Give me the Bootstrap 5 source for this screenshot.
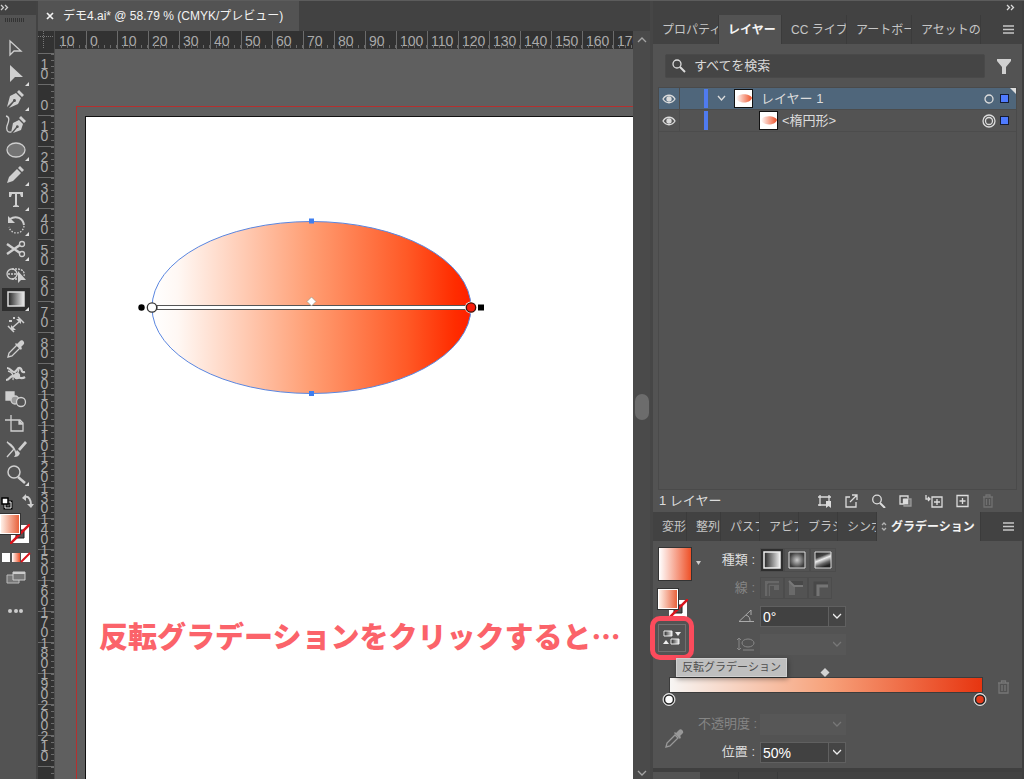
<!DOCTYPE html>
<html lang="ja">
<head>
<meta charset="utf-8">
<meta name="viewport" content="width=device-width, initial-scale=1">
<title>デモ4.ai</title>
<link href="https://cdn.jsdelivr.net/npm/bootstrap@5.3.0/dist/css/bootstrap.min.css" rel="stylesheet">
<style>
:root{--panel:#535353;--dark:#424242;--line:#484848;--ink:#dcdcdc}
body{background:var(--dark);color:var(--ink);font-family:"Liberation Sans","Noto Sans CJK JP",sans-serif;font-size:13px;line-height:20px;border-top:1px solid #5c5c5c}
svg{display:block;flex:none}
button{background:none;border:0;padding:0;color:inherit}
.i{fill:none;stroke:currentColor;stroke-width:1.3}
/* toolbar */
.toolbar{width:38px;background:var(--panel);border-right:2px solid #434343;color:#cfcfcf;flex:none}
.collapse-bar{height:14px;background:var(--dark);flex:none}
.grip{width:20px;height:4px;margin:3px 0 16px 5px;background:repeating-linear-gradient(90deg,#333 0 1px,transparent 1px 2px);flex:none}
.tool{width:28px;height:23px;margin:0 0 2px 2px;position:relative}
.tool.fly::after{content:"";position:absolute;right:1px;bottom:0;border:2px solid;border-color:transparent #ddd #ddd transparent}
.tool.on{background:#2e2e2e}
.pair{position:relative;width:30px;height:30px}
.pair-fill{position:absolute;left:0;top:0;width:20px;height:20px;border:1px solid #fff;outline:1px solid #333;background:linear-gradient(90deg,#fff0e7,#e8623c)}
.pair svg{position:absolute;right:0;bottom:0}
/* document window */
.doc-tabs{height:31px;background:var(--dark)}
.doc-tab{width:261px;background:var(--panel);color:#f2f2f2;font-size:12px;padding-left:8px}
.ruler{background:#323232;color:#aaa;font-size:14px}
.corner{width:17px;height:18px;flex:none;border-right:1px solid #4b4b4b}
.hr-cell{width:31px;height:18px;flex:none;border-left:1px solid #6b6b6b;padding-left:3px;line-height:21px;position:relative}
.hr-cell:first-child{border-color:transparent}
.hr-cell::after{content:"";position:absolute;left:0;right:0;bottom:1px;height:3px;background:repeating-linear-gradient(90deg,transparent 0 5px,#6b6b6b 5px 6px)}
.v-ruler{width:17px;padding-top:4px;border-right:1px solid #4b4b4b;overflow:hidden;flex:none}
.vr-cell{height:31px;flex:none;border-top:1px solid #6b6b6b;padding:0 3px 5px 0;line-height:10px;position:relative}
.vr-cell::after{content:"";position:absolute;top:0;bottom:0;right:0;width:3px;background:repeating-linear-gradient(0deg,transparent 0 5px,#6b6b6b 5px 6px)}
.stage{background:#5f5f5f;padding:57px 0 0 21px;overflow:hidden}
.bleed{border:solid #b5302f;border-width:1px 0 0 1px;padding:9px 0 0 8px}
.artboard{background:#fff;border:solid #111;border-width:1px 0 0 1px;overflow:hidden}
.art{margin:101px 0 0 50px}
.caption-text{margin:221px 0 0 13px;font-family:"Noto Sans CJK JP",sans-serif;font-weight:900;font-size:29px;line-height:32px;color:#fb636a;white-space:nowrap}
.scroll{width:17px;background:#4a4a4a;color:#a5a5a5;flex:none;padding:6px 0 2px}
.thumb{width:14px;height:26px;border-radius:7px;background:#6c6c6c}
/* panels */
.dock{width:374px;flex:none;border-left:3px solid #464646;border-right:2px solid #3e3e3e}
.ptabs{background:var(--dark);font-size:12px;height:29px;color:#c6c6c6;flex:none}
.ptab{overflow:hidden;white-space:nowrap;text-align:left;border-right:1px solid #3b3b3b;padding-left:9px;flex:none}
.ptab.on{background:var(--panel);color:#f4f4f4;font-weight:700}
.w34{width:34px}.w39{width:39px}.w47{width:47px}.w63{width:63px}.w65{width:65px}.w66{width:66px}.w69{width:69px}.w104{width:104px}
.panel{background:var(--panel)}
.stack{padding-top:10px}
.search-box{width:320px;height:24px;margin-left:12px;background:#454545;border:1px solid #494949;border-radius:2px}
.search-box input{background:none;border:0;padding:0;color:#d8d8d8;outline:0;min-width:0}
.search-box input::placeholder{color:#d8d8d8}
.layers{margin:9px 5px 0;border:1px solid #4a4a4a}
.lrow{height:22px;border-bottom:1px solid #4c4c4c;position:relative}
.lrow.on{background:#4f667b}
.lrow.on::after{content:"";position:absolute;right:0;top:0;border:3px solid;border-color:#ddd #ddd transparent transparent}
.eye{width:21px;height:21px;border-right:1px solid #4c4c4c;padding-left:3px}
.stripe{width:4px;height:19px;margin-left:24px;background:#4f7bf0}
.thumbnail{width:19px;height:19px;border:1px solid #111;background:#fff}
.child{margin-left:51px}
.sel{width:9px;height:9px;background:#4f7bff;border:1px solid #151c33;margin:0 7px 0 6px}
.lfoot{height:22px;padding:0 28px 0 6px}
.gpanel{padding:5px 0 0 5px;height:227px;flex:none}
.gside{width:40px;flex:none}
.grad-main{width:34px;height:34px;margin-top:1px;border:1px solid #333;background:linear-gradient(90deg,#fff,#ee5128)}
.grow{height:28px}
.glabel{width:57px;text-align:right;margin-right:5px;flex:none}
.off{color:#858585}
.gbtn{width:26px;height:24px;border:1px solid #4c4c4c}
.gbtn.on{width:24px;background:#2e2e2e}
.sbtn{width:24px;height:22px;border:1px solid #4c4c4c}
.combo{width:86px;height:21px;border:1px solid #606060}
.combo input{width:67px;height:19px;background:#414141;border:0;color:#fff;font-size:14px;padding:2px 0 0 2px;border-radius:0}
.combo button{width:17px;border-left:1px solid #606060;background:#454545;color:#eee}
.combo.off,.combo.off button{border-color:#575757;background:#575757;color:#777}
.combo.off input{background:#575757}
.reverse{width:28px;height:28px;border:1px solid #707070;position:relative;margin-top:5px}
.ring{position:absolute;left:-9px;top:-9px;width:44px;height:44px;border:5px solid #fb4b5c;border-radius:10px}
.tip{position:absolute;left:18px;top:0;width:111px;height:19px;background:#bfbfbf;border:1px solid #d0d0d0;color:#4e4e4e;font-size:11px;line-height:17px;box-shadow:1px 2px 5px #0006;z-index:2;white-space:nowrap}
.gslider{height:52px;padding-top:9px;position:relative}
.track{width:314px;height:16px;margin-left:11px;border:1px solid #3c3c3c;background:linear-gradient(90deg,#f7f5f3,#f7a37c 50%,#e73510)}
.below{border-top:4px solid #3f3f3f;overflow:hidden}
.next-tabs{height:7px}
.fill{min-width:0;min-height:0}
</style>
</head>
<body class="d-flex vh-100 overflow-hidden">

<aside class="toolbar d-flex flex-column" aria-label="ツール">
  <div class="collapse-bar"><svg width="10" height="14" class="i"><path d="M1 4l2.500 2.500L1 9M5 4l2.500 2.500L5 9"/></svg></div>
  <div class="grip"></div>
  <button class="tool" aria-label="選択"><svg class="i" width="28" height="23"><path d="M8 3v14l4-4h7z"/></svg></button>
  <button class="tool fly" aria-label="ダイレクト選択"><svg width="28" height="23" fill="currentColor"><path d="M8 2v17l5-5h8z"/></svg></button>
  <button class="tool fly" aria-label="ペン"><svg width="28" height="23" fill="currentColor"><path d="M5 19l3-11 6-3 5 5-3 6-9 4 5-6a1.500 1.500 0 1 0-1-1zM15 4l2-2 5 5-2 2z"/></svg></button>
  <button class="tool" aria-label="曲線"><svg width="28" height="23" fill="currentColor"><path d="M9 20l2-10 6-3 4 4-2 6-8 3 4-5a1.400 1.400 0 1 0-1-1zM17 5l2-2 5 5-2 2z"/><path class="i" d="M4 3c5 1 2 7 1 10s0 7 4 6"/></svg></button>
  <button class="tool fly" aria-label="楕円形"><svg class="i" width="28" height="23"><ellipse cx="14" cy="12" rx="9" ry="7" fill="#747474"/></svg></button>
  <button class="tool fly" aria-label="鉛筆"><svg width="28" height="23" fill="currentColor"><path d="M5 20l2-6 8-8 4 4-8 8zM16 5l2-2 4 4-2 2z"/></svg></button>
  <button class="tool fly" aria-label="文字"><svg width="28" height="23" fill="currentColor"><path d="M7 4h14v5h-2l-1-3h-3v11l2 1v1h-6v-1l2-1V6h-3L9 9H7z"/></svg></button>
  <button class="tool fly" aria-label="回転"><svg width="28" height="23" class="i"><path stroke-width="2" d="M8 6c6-4 13-1 14 6"/><path d="M6 3v7h7z" fill="currentColor" stroke="none"/><path stroke-dasharray="1.500 1.500" d="M22 13c-1 9-13 9-15 1"/></svg></button>
  <button class="tool fly" aria-label="はさみ"><svg width="28" height="23" class="i" stroke-width="2"><path d="M5 6l13 9M5 16l13-9" stroke-width="2.400"/><circle cx="20" cy="6" r="2.500"/><circle cx="20" cy="16" r="2.500"/></svg></button>
  <button class="tool" aria-label="シェイプ形成"><svg width="28" height="23" class="i"><circle cx="10" cy="11" r="5"/><path d="M10 6h6c5 0 7 4 6 7M10 16h5M6 11h10" stroke-dasharray="2 1"/><path d="M16 8v12l3-3h5z" fill="currentColor" stroke="none"/></svg></button>
  <button class="tool fly on" aria-label="グラデーション"><svg width="28" height="23"><defs><linearGradient id="gw"><stop stop-color="#222"/><stop offset="1" stop-color="#eee"/></linearGradient></defs><rect x="6" y="4" width="16" height="14" fill="url(#gw)" stroke="#ddd" stroke-width="1.500"/></svg></button>
  <button class="tool" aria-label="寸法"><svg width="28" height="23" class="i"><path d="M6 13l6 6M16 4l6 6M10 15l8-7" stroke-width="1.500"/><path d="M9 12v5h5zM19 11V6h-5z" fill="currentColor" stroke="none"/><path d="M7 8h3M11 5h2" stroke-width="2"/></svg></button>
  <button class="tool" aria-label="スポイト"><svg width="28" height="23" class="i"><path d="M6 19l1-4 8-8 3 3-8 8z"/><path d="M13 6l6 6 1-2-1-1 3-3c1-2-2-5-4-3l-3 3-1-1z" fill="currentColor" stroke="none"/></svg></button>
  <button class="tool" aria-label="パペットワープ"><svg width="28" height="23" class="i"><path d="M5 5c4 0 4 4 7 4s3-5 6-4 0 5 5 4M4 17c4 0 4-5 8-4s7 4 11 1" stroke-width="2.200"/><path d="M6 8c4 1 6 4 5 9M17 6l-3 10"/><circle cx="15" cy="13" r="2.500" fill="currentColor"/></svg></button>
  <button class="tool" aria-label="ブレンド"><svg width="28" height="23" class="i"><path d="M4 4h8v8H4z" fill="currentColor"/><circle cx="13" cy="12" r="4" fill="#999"/><circle cx="19" cy="14" r="4.500" fill="#535353"/></svg></button>
  <button class="tool" aria-label="アートボード"><svg width="28" height="23" class="i"><path d="M9 2v5M3 7h6M9 7h9l3 3v8H9z"/><path d="M17 7v4h4" fill="currentColor"/></svg></button>
  <button class="tool" aria-label="ブラシ"><svg width="28" height="23" class="i"><path d="M5 4l7 7-7 8M5 4c4 2 8 5 9 12"/><path d="M23 3l2 2-7 8-2-2zM15 12l3 3c-1 3-3 4-6 4 2-2 1-5 3-7z" fill="currentColor" stroke="none"/></svg></button>
  <button class="tool fly" aria-label="ズーム"><svg width="28" height="23" class="i"><circle cx="12" cy="9" r="6" stroke-width="1.500"/><path d="M16 14l7 6" stroke-width="2.500"/></svg></button>

  <div class="d-flex mt-1 gap-2">
    <svg class="mt-1" width="13" height="14"><path d="M5 6h6v6H5z" fill="none" stroke="#000" stroke-width="3"/><path d="M5 6h6v6H5z" fill="none" stroke="#fff"/><path d="M2 2h6v6H2z" fill="#fff" stroke="#000" stroke-width="1.500"/></svg>
    <svg width="14" height="18" class="i"><path d="M4 5c4-1 6 3 6 8" stroke-width="2"/><path d="M1 6l4-4v7zM6 12h7l-3 4z" fill="currentColor" stroke="none"/></svg>
  </div>
  <div class="pair mt-1"><svg width="20" height="20"><path d="M1 1h18v18H1z" fill="#fff"/><path d="M6 6h8v8H6z" fill="#535353" stroke="#222"/><path d="M0 20L20 0" stroke="#d8141c" stroke-width="2.500"/></svg><div class="pair-fill"></div></div>
  <svg class="mt-2" width="32" height="11"><path d="M2 1h8v9H2z" fill="#fff"/><path d="M12 1h8v9h-8z" fill="url(#go)"/><path d="M21 1h9v9h-9z" fill="#fff"/><path d="M21 10l9-9" stroke="#d8141c" stroke-width="2"/><defs><linearGradient id="go"><stop stop-color="#fff"/><stop offset="1" stop-color="#ee5128"/></linearGradient></defs></svg>
  <svg class="mt-2" width="32" height="16"><path d="M7 4h12v8H7z" fill="#777" stroke="#bbb"/><path d="M13 1h12v8H13z" fill="#777" stroke="#ccc"/><path d="M13 2h12" stroke="#ccc" stroke-width="2"/></svg>
  <svg class="mt-3" width="32" height="12" fill="#ccc"><circle cx="10" cy="8" r="2"/><circle cx="16" cy="8" r="2"/><circle cx="21" cy="8" r="2"/></svg>
</aside>

<main class="fill d-flex flex-column flex-grow-1">
  <div class="doc-tabs d-flex"><div class="doc-tab d-flex align-items-center gap-2"><button aria-label="閉じる"><svg width="9" height="9" stroke="#f2f2f2" stroke-width="1.700"><path d="M1 1l6 6M7 1L1 7"/></svg></button><span class="text-nowrap">デモ4.ai* @ 58.79 % (CMYK/プレビュー)</span></div></div>
  <div class="fill d-flex flex-grow-1">
    <div class="fill d-flex flex-column flex-grow-1">
      <div class="ruler d-flex overflow-hidden"><svg class="corner" stroke="#777" stroke-dasharray="1 1"><path d="M0 5.500h17M5.500 0v17"/></svg><div class="d-flex" id="hRuler"></div></div>
      <div class="fill d-flex flex-grow-1">
        <div class="ruler v-ruler d-flex flex-column" id="vRuler"></div>
        <div class="stage flex-grow-1 d-flex">
          <div class="bleed flex-grow-1 d-flex"><div class="artboard flex-grow-1">
            <svg class="art" width="350" height="180" viewBox="136 218 350 180">
              <defs><linearGradient id="ge"><stop stop-color="#fff"/><stop offset=".08" stop-color="#fff8f4"/><stop offset=".5" stop-color="#ff9d72"/><stop offset=".8" stop-color="#ff5926"/><stop offset=".95" stop-color="#ff2c00"/><stop offset="1" stop-color="#ff2000"/></linearGradient></defs>
              <ellipse cx="311.500" cy="307.500" rx="159.500" ry="86" fill="url(#ge)" stroke="#5a86e0"/>
              <path d="M157 305.500h309v4H157z" fill="#fff" stroke="#555"/>
              <path d="M311.500 297l4.500 4.500-4.500 4.500-4.500-4.500z" fill="#fff" stroke="#998" stroke-width=".7"/>
              <path d="M309 218.500h5v5h-5zM309 391h5v5h-5z" fill="#3f7ff0"/>
              <circle cx="141.500" cy="307.500" r="3.200"/><path d="M478 304.500h6v6h-6z"/>
              <circle cx="152" cy="307.500" r="4.700" fill="#fff" stroke="#333" stroke-width="1.300"/>
              <circle cx="471" cy="307.500" r="6" fill="#fff"/><circle cx="471" cy="307.500" r="4.700" fill="#f91c0c" stroke="#401008" stroke-width="1.300"/>
            </svg>
            <p class="caption-text">反転グラデーションをクリックすると…</p>
          </div></div>
        </div>
      </div>
    </div>
    <div class="scroll d-flex flex-column align-items-center justify-content-between">
      <svg class="i" width="10" height="7"><path d="M1 5l4-4 4 4"/></svg><div class="thumb"></div><svg class="i" width="10" height="7"><path d="M1 1l4 4 4-4"/></svg>
    </div>
  </div>
</main>

<aside class="dock d-flex flex-column">
  <div class="collapse-bar d-flex justify-content-end pe-1"><svg width="12" height="14" class="i"><path d="M1 4l2.500 2.500L1 9M5 4l2.500 2.500L5 9"/></svg></div>
  <div class="ptabs d-flex" role="tablist">
    <button class="ptab w66">プロパティ</button><button class="ptab on w63">レイヤー</button><button class="ptab w65">CC ライブ</button><button class="ptab w65">アートボー</button><button class="ptab w69">アセットの</button>
    <button class="ms-auto pe-2" aria-label="メニュー"><svg width="11" height="9" class="i"><path d="M0 1h11M0 4.500h11M0 8h11"/></svg></button>
  </div>
  <div class="panel stack flex-grow-1 d-flex flex-column">
    <div class="d-flex align-items-center">
      <label class="search-box d-flex align-items-center ps-1 mb-0"><svg width="16" height="16" class="i"><circle cx="7" cy="6" r="4"/><path d="M10 9l5 5" stroke-width="2"/></svg><input class="flex-grow-1 ms-2" type="text" placeholder="すべてを検索" aria-label="すべてを検索"></label>
      <button class="ms-2 ps-1" aria-label="フィルター"><svg width="14" height="15" fill="#d0d0d0"><path d="M0 0h14v2L9 8v7H5V8L0 2z"/></svg></button>
    </div>
    <div class="layers flex-grow-1">
      <div class="lrow on d-flex align-items-center">
        <button class="eye" aria-label="表示"><svg width="14" height="12" class="i"><path d="M1 6c3-5 9-5 12 0-3 5-9 5-12 0z"/><circle cx="7" cy="6" r="2" fill="currentColor"/></svg></button><span class="stripe"></span>
        <svg width="10" height="7" class="i ms-2 me-2"><path d="M2 1l3.500 4L9 1"/></svg>
        <svg class="thumbnail me-2"><path d="M1 8c2-5 14-5 16 0-2 6-14 6-16 0z" fill="url(#go)"/></svg><span>レイヤー 1</span>
        <svg width="10" height="10" class="i ms-auto"><circle cx="5" cy="5" r="4"/></svg><span class="sel"></span>
      </div>
      <div class="lrow d-flex align-items-center">
        <button class="eye" aria-label="表示"><svg width="14" height="12" class="i"><path d="M1 6c3-5 9-5 12 0-3 5-9 5-12 0z"/><circle cx="7" cy="6" r="2" fill="currentColor"/></svg></button><span class="stripe"></span>
        <svg class="thumbnail child me-1"><path d="M1 8c2-5 14-5 16 0-2 6-14 6-16 0z" fill="url(#go)"/></svg><span>&lt;楕円形&gt;</span>
        <svg width="14" height="14" class="i ms-auto"><circle cx="7" cy="7" r="6"/><circle cx="7" cy="7" r="3.500"/></svg><span class="sel ms-1"></span>
      </div>
    </div>
    <div class="lfoot d-flex align-items-center justify-content-between">
      <span>1 レイヤー</span>
      <div class="d-flex gap-2 align-items-center">
      <button class="me-1" aria-label="書き出し用に追加"><svg width="15" height="14" class="i"><path d="M3 1v11M1 3h13M12 1v6M1 11h8"/><path d="M9 7h5v7l-2.500-2L9 14z" fill="currentColor" stroke="none"/></svg></button>
      <button class="me-1" aria-label="書き出し"><svg width="15" height="14" class="i"><path d="M6 3H2v10h10V8M6 8l7-7M8 1h5v5"/></svg></button>
      <button class="me-1" aria-label="検索"><svg width="15" height="14" class="i"><circle cx="6" cy="5.500" r="4.300"/><path d="M9 9l5 5" stroke-width="2"/></svg></button>
      <button class="me-1" aria-label="マスク"><svg width="15" height="14" class="i"><path d="M2 2h8v8H2z"/><path d="M6 5h7v7H6z" fill="#777" stroke="#999"/><path d="M5.500 5.500h4v4h-4z" fill="#ddd"/></svg></button>
      <button class="me-1" aria-label="サブレイヤー"><svg width="18" height="14" class="i"><path d="M7 3h10v10H7zM12 5v6M9 8h6M1 1v4h4M3 3l2 2-2 2"/></svg></button>
      <button class="me-1" aria-label="新規レイヤー"><svg width="15" height="14" class="i"><path d="M2 1.500h11v11H2zM7.500 4v6M4.500 7h6"/></svg></button>
      <button class="off" aria-label="削除" disabled><svg width="12" height="14" class="i" opacity=".6"><path d="M1 3h10M4 3V1h4v2M2 3v10h8V3M4.500 5v6M7.500 5v6"/></svg></button>
      </div>
    </div>
  </div>
  <div class="ptabs d-flex" role="tablist">
    <button class="ptab w34">変形</button><button class="ptab w34">整列</button><button class="ptab w39">パスフ</button><button class="ptab w39">アピア</button><button class="ptab w39">ブラシ</button><button class="ptab w39">シンボ</button><button class="ptab on w104 ps-1 d-flex align-items-center"><svg width="6" height="9" class="i me-1" opacity=".6"><path d="M1 3l2-2 2 2M1 6l2 2 2-2"/></svg>グラデーション</button>
    <button class="ms-auto pe-2" aria-label="メニュー"><svg width="11" height="9" class="i"><path d="M0 1h11M0 4.500h11M0 8h11"/></svg></button>
  </div>
  <section class="panel gpanel">
    <div class="d-flex">
      <div class="gside">
        <div class="d-flex align-items-center"><div class="grad-main flex-shrink-0"></div><svg class="ms-1" width="6" height="5" fill="#ccc"><path d="M0 0h5L2.500 4z"/></svg></div>
        <div class="pair mt-2"><svg width="20" height="20"><path d="M1 1h18v18H1z" fill="#fff"/><path d="M6 6h8v8H6z" fill="#535353" stroke="#222"/><path d="M0 20L20 0" stroke="#d8141c" stroke-width="2.500"/></svg><div class="pair-fill"></div></div>
        <button class="reverse" aria-label="反転グラデーション"><svg width="26" height="26" fill="#eee"><path d="M5 6h8v5H5z" fill="url(#gw)" stroke="#eee"/><path d="M16 7h6l-3 4zM4 19h6l-3-4z"/><path d="M12 14h8v5h-8z" fill="url(#gw)" stroke="#eee"/></svg><span class="ring"></span></button>
      </div>
      <div>
        <div class="grow d-flex align-items-center"><span class="glabel">種類 :</span>
          <button class="gbtn on" aria-label="線形"><svg class="m-auto" width="18" height="18"><path d="M1 1h16v16H1z" fill="url(#gw)" stroke="#eee" stroke-width="1.500"/></svg></button>
          <button class="gbtn" aria-label="円形"><svg class="m-auto" width="18" height="18"><defs><radialGradient id="gr"><stop stop-color="#ccc"/><stop offset="1" stop-color="#3c3c3c"/></radialGradient></defs><path d="M1 1h16v16H1z" fill="url(#gr)" stroke="#ddd"/></svg></button>
          <button class="gbtn" aria-label="フリーフォーム"><svg class="m-auto" width="18" height="18"><defs><linearGradient id="gf" x1="0" y1="0" x2=".4" y2="1"><stop stop-color="#222"/><stop offset=".35" stop-color="#444"/><stop offset=".55" stop-color="#eee"/><stop offset=".8" stop-color="#666"/><stop offset="1" stop-color="#222"/></linearGradient></defs><path d="M1 1h16v16H1z" fill="url(#gf)" stroke="#ddd"/></svg></button></div>
        <div class="grow d-flex align-items-center off"><span class="glabel">線 :</span>
          <button class="sbtn" disabled aria-label="線内"><svg class="m-auto" width="16" height="16"><path d="M1 1h14v9h-5V6H6v10H1z" fill="#686868"/><path d="M4 16V4h11" stroke="#484848" fill="none"/></svg></button><button class="sbtn" disabled aria-label="線に沿って"><svg class="m-auto" width="16" height="16"><path d="M1 1h14v4H1z" fill="#484848"/><path d="M1 1l6 6v8H1z" fill="#6a6a6a"/><path d="M1 1l5 5h9" stroke="#777" stroke-width="2" fill="none"/></svg></button><button class="sbtn" disabled aria-label="線に交差"><svg class="m-auto" width="16" height="16"><path d="M3 16V3h13" stroke="#484848" stroke-width="3" fill="none"/><path d="M6 16V6h10" stroke="#747474" stroke-width="3" fill="none"/></svg></button></div>
        <div class="grow d-flex align-items-center"><label for="ang" class="glabel"><svg class="ms-auto" width="17" height="14" fill="none" stroke="#aaa"><path d="M13 1L1 12.500h15M8 6c3 1 4 3 4 6M13 1v5"/></svg></label>
          <div class="combo d-flex"><input id="ang" type="text" value="0°"><button aria-label="角度一覧"><svg class="m-auto i" width="9" height="6"><path d="M0 1l4 4 4-4"/></svg></button></div></div>
        <div class="grow d-flex align-items-center off"><label for="asp" class="glabel"><svg class="ms-auto" width="19" height="14" fill="none" stroke="#888"><path d="M3 1v12M1 3l2-2 2 2M1 11l2 2 2-2M7 13h11"/><ellipse cx="12" cy="6" rx="6" ry="4"/></svg></label>
          <div class="combo off d-flex"><input id="asp" type="text" disabled><button disabled aria-label="縦横比一覧"><svg class="m-auto i" width="9" height="6"><path d="M0 1l4 4 4-4"/></svg></button></div></div>
      </div>
    </div>
    <div class="gslider d-flex">
      <div class="tip text-center">反転グラデーション</div>
      <div>
        <svg width="335" height="10"><path d="M167 1l4.500 4.500L167 10l-4.500-4.500z" fill="#d2d2d2"/></svg>
        <div class="track"></div>
        <svg width="335" height="14"><g stroke="#222"><circle cx="11" cy="6.500" r="6" fill="#fff" stroke="#ddd"/><circle cx="11" cy="6.500" r="4.500" fill="#fff" stroke-width="1.500"/><circle cx="322" cy="6.500" r="6" fill="#fff" stroke="#ddd"/><circle cx="322" cy="6.500" r="4.500" fill="#e63a1a" stroke-width="1.500"/></g></svg>
      </div>
      <button class="off align-self-start mt-2 pt-1 ms-1" disabled aria-label="分岐点を削除"><svg width="14" height="16" class="i" opacity=".7"><path d="M1 4h11M4.500 4V2h4v2M2 4v10h9V4M5 6v6M8 6v6"/></svg></button>
    </div>
    <div class="d-flex align-items-center">
      <div class="gside"><svg width="28" height="23" class="i ms-1" opacity=".5"><path d="M4 20l1-4 8-8 3 3-8 8z"/><path d="M12 6l6 6 1-2-1-1 3-3c1-2-2-5-4-3l-3 3-1-1z" fill="currentColor" stroke="none"/></svg></div>
      <div>
        <div class="grow d-flex align-items-center off"><label for="opa" class="glabel text-nowrap">不透明度 :</label>
          <div class="combo off d-flex"><input id="opa" type="text" disabled><button disabled aria-label="不透明度一覧"><svg class="m-auto i" width="9" height="6"><path d="M0 1l4 4 4-4"/></svg></button></div></div>
        <div class="grow d-flex align-items-center"><label for="pos" class="glabel">位置 :</label>
          <div class="combo d-flex"><input id="pos" type="text" value="50%"><button aria-label="位置一覧"><svg class="m-auto i" width="9" height="6"><path d="M0 1l4 4 4-4"/></svg></button></div></div>
      </div>
    </div>
  </section>
  <div class="below flex-shrink-0"><div class="next-tabs d-flex"><div class="panel w47"></div><div class="w39 border-end border-dark border-opacity-25"></div><div class="w39 border-end border-dark border-opacity-25"></div></div></div>
</aside>

<script>
const labels = n => [10, ...Array.from({length: n}, (_, i) => i * 10)];
document.getElementById('hRuler').innerHTML = labels(18).map(v => `<div class="hr-cell">${v}</div>`).join('');
document.getElementById('vRuler').innerHTML = labels(22).map(v => `<div class="vr-cell d-flex flex-column align-items-center justify-content-end">${[...String(v)].map(d => `<span>${d}</span>`).join('')}</div>`).join('') + '<div class="vr-cell"></div>';
</script>
<script src="https://cdn.jsdelivr.net/npm/bootstrap@5.3.0/dist/js/bootstrap.bundle.min.js"></script>
</body>
</html>
